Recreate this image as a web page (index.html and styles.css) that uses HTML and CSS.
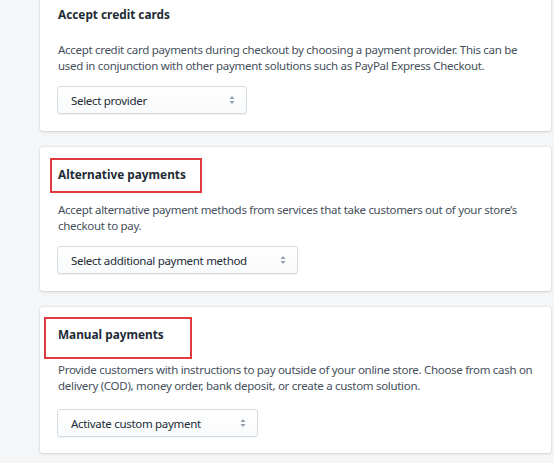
FILE: index.html
```html
<!DOCTYPE html>
<html lang="en">
<head>
<meta charset="utf-8">
<title>Payments</title>
<link rel="stylesheet" href="styles.css">
</head>
<body>
<main class="page">
  <section class="card">
    <h2 class="card-title">Accept credit cards</h2>
    <p class="card-text">Accept credit card payments during checkout by choosing a payment provider. This can be used in conjunction with other payment solutions such as PayPal Express Checkout.</p>
    <div class="select select-provider">
      <span class="select-label">Select provider</span>
      <svg class="select-arrow" width="6" height="10" viewBox="0 0 6 10"><path d="M3 1 L5.5 4 H0.5 Z M3 9 L5.5 6 H0.5 Z" fill="#919eab"/></svg>
    </div>
  </section>
  <section class="card">
    <div class="highlight highlight-alt"></div>
    <h2 class="card-title">Alternative payments</h2>
    <p class="card-text">Accept alternative payment methods from services that take customers out of your store’s checkout to pay.</p>
    <div class="select select-additional">
      <span class="select-label">Select additional payment method</span>
      <svg class="select-arrow" width="6" height="10" viewBox="0 0 6 10"><path d="M3 1 L5.5 4 H0.5 Z M3 9 L5.5 6 H0.5 Z" fill="#919eab"/></svg>
    </div>
  </section>
  <section class="card card-manual">
    <div class="highlight highlight-manual"></div>
    <h2 class="card-title">Manual payments</h2>
    <p class="card-text">Provide customers with instructions to pay outside of your online store. Choose from cash on delivery (COD), money order, bank deposit, or create a custom solution.</p>
    <div class="select select-custom">
      <span class="select-label">Activate custom payment</span>
      <svg class="select-arrow" width="6" height="10" viewBox="0 0 6 10"><path d="M3 1 L5.5 4 H0.5 Z M3 9 L5.5 6 H0.5 Z" fill="#919eab"/></svg>
    </div>
  </section>
</main>
</body>
</html>
```

FILE: styles.css
```css
html, body {
  margin: 0;
  padding: 0;
  background: #f4f6f8;
  height: 100%;
  overflow: hidden;
}
body {
  font-family: "Noto Sans", "Open Sans", sans-serif;
  color: #212b36;
}
.page {
  display: flex;
  flex-direction: column;
  gap: 16px;
  margin-top: -13px;
  padding-left: 40px;
  width: 511px;
}
.card {
  position: relative;
  background: #fff;
  border-radius: 3px;
  box-shadow: 0 0 0 1px rgba(63, 63, 68, 0.05), 0 1px 3px 0 rgba(63, 63, 68, 0.15);
  padding: 17px 17px 17px;
}
.card-title {
  margin: 0 0 0 1px;
  font-size: 11.8px;
  font-weight: 700;
  line-height: 20px;
  color: #212b36;
}
.card-text {
  margin: 18px 0 12px 1px;
  font-size: 11.5px;
  letter-spacing: -0.3px;
  line-height: 16px;
  color: #454f5b;
}
.card-manual {
  padding-bottom: 16px;
}
.card-manual .card-text {
  margin-bottom: 15px;
}
.select {
  box-sizing: border-box;
  height: 28px;
  display: flex;
  align-items: center;
  justify-content: space-between;
  padding: 0 11px 0 13px;
  border: 1px solid #d3dbe2;
  border-radius: 3px;
  background: linear-gradient(to bottom, #fff, #f9fafb);
  box-shadow: 0 1px 0 rgba(22, 29, 37, 0.05);
  font-size: 11.5px;
  letter-spacing: -0.3px;
  color: #212b36;
}
.select-provider { width: 190px; }
.select-additional { width: 241px; }
.select-custom { width: 201px; }
.highlight {
  position: absolute;
  border: 2px solid #e0393e;
  box-sizing: border-box;
}
.highlight-alt {
  left: 10px;
  top: 11px;
  width: 152px;
  height: 35px;
}
.highlight-manual {
  left: 4px;
  top: 10px;
  width: 148px;
  height: 42px;
}
```
